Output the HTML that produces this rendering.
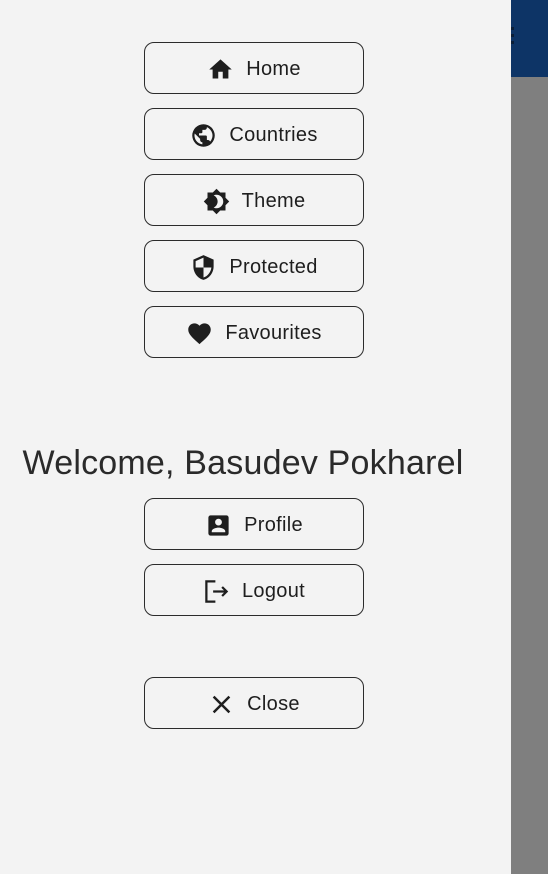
<!DOCTYPE html>
<html><head><style>
body{margin:0;width:548px;height:874px;overflow:hidden;background:#7f7f7f;font-family:"Liberation Sans",sans-serif;position:relative}
.panel{position:absolute;left:0;top:0;width:511px;height:874px;background:#f3f3f3}
.top{position:absolute;left:511px;top:0;width:37px;height:77px;background:#0d3466}
.dots{position:absolute;left:511px;top:27px;width:3px;height:19px;background:repeating-linear-gradient(#0a1e38 0 3px,transparent 3px 7px)}
.btn{position:absolute;left:144px;width:218px;height:50px;border:1px solid #2b2b2b;border-radius:10px;display:flex;align-items:center;justify-content:center;font-size:20px;color:#1e1e1e;gap:12px;padding-top:2px;box-sizing:border-box;height:52px;width:220px;letter-spacing:0.3px}
.btn svg{width:27px;height:27px;fill:#1e1e1e}
.w{position:absolute;left:0;width:486px;text-align:center;top:444px;font-size:34px;color:#2a2a2a;letter-spacing:0.2px}
</style></head><body>
<div class="top"></div><div class="dots"></div>
<div class="panel">
<div class="btn" style="top:42px"><svg viewBox="0 0 24 24"><path d="M10 20v-6h4v6h5v-8h3L12 3 2 12h3v8z"/></svg>Home</div>
<div class="btn" style="top:108px"><svg viewBox="0 0 24 24"><path d="M12 2a10 10 0 100 20 10 10 0 000-20zm-1 17.9A8 8 0 014.2 10.2L9 15v1c0 1.1.9 2 2 2zm6.9-2.5c-.3-.8-1-1.4-1.9-1.4h-1v-3c0-.6-.4-1-1-1H8v-2h2c.6 0 1-.4 1-1V7h2c1.1 0 2-.9 2-2v-.4a8 8 0 012.9 12.8z"/></svg>Countries</div>
<div class="btn" style="top:174px"><svg viewBox="0 0 24 24"><path d="M20 8.7V4h-4.7L12 .7 8.7 4H4v4.7L.7 12 4 15.3V20h4.7l3.3 3.3 3.3-3.3H20v-4.7l3.3-3.3zM12 18c-.9 0-1.8-.2-2.5-.6C11.6 16.4 13 14.4 13 12s-1.4-4.4-3.5-5.4c.7-.4 1.6-.6 2.5-.6a6 6 0 010 12z"/></svg>Theme</div>
<div class="btn" style="top:240px"><svg viewBox="0 0 24 24"><path d="M12 1L3 5v6c0 5.6 3.8 10.7 9 12 5.2-1.3 9-6.4 9-12V5zm0 11h7c-.5 4.1-3.3 7.8-7 8.9V12H5V6.3l7-3.1z"/></svg>Protected</div>
<div class="btn" style="top:306px"><svg viewBox="0 0 24 24"><path d="M12 21.4l-1.5-1.3C5.4 15.4 2 12.3 2 8.5 2 5.4 4.4 3 7.5 3c1.7 0 3.4.8 4.5 2.1C13.1 3.8 14.8 3 16.5 3 19.6 3 22 5.4 22 8.5c0 3.8-3.4 6.9-8.5 11.5z"/></svg>Favourites</div>
<div class="w">Welcome, Basudev Pokharel</div>
<div class="btn" style="top:498px"><svg viewBox="0 0 24 24"><path d="M3 5v14c0 1.1.9 2 2 2h14c1.1 0 2-.9 2-2V5c0-1.1-.9-2-2-2H5c-1.1 0-2 .9-2 2zm12 4c0 1.7-1.3 3-3 3s-3-1.3-3-3 1.3-3 3-3 3 1.3 3 3zm-9 8c0-2 4-3.1 6-3.1s6 1.1 6 3.1v1H6z"/></svg>Profile</div>
<div class="btn" style="top:564px"><svg viewBox="0 0 24 24" style="fill:none;stroke:#1e1e1e;stroke-width:2"><path d="M11 3H3v18h8M9 12h12M17 8l4 4-4 4"/></svg>Logout</div>
<div class="btn" style="top:677px"><svg viewBox="0 0 24 24" style="fill:none;stroke:#1e1e1e;stroke-width:2.2"><path d="M5 5l14 14M19 5L5 19"/></svg>Close</div>
</div>
</body></html>
